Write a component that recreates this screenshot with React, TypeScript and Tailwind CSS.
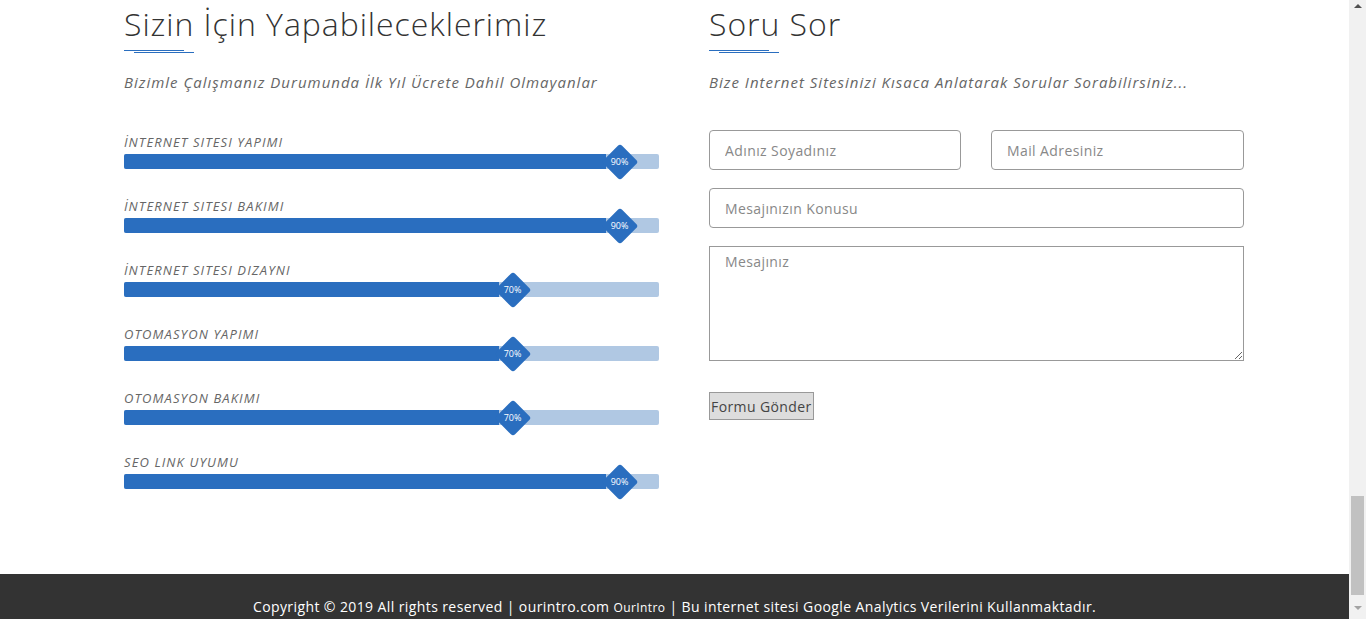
import React from 'react';

const skills = [
  { label: 'İNTERNET SITESI YAPIMI', value: 90 },
  { label: 'İNTERNET SITESI BAKIMI', value: 90 },
  { label: 'İNTERNET SITESI DIZAYNI', value: 70 },
  { label: 'OTOMASYON YAPIMI', value: 70 },
  { label: 'OTOMASYON BAKIMI', value: 70 },
  { label: 'SEO LINK UYUMU', value: 90 },
];

function SectionTitle({ title, subtitle }: { title: string; subtitle: string }) {
  return (
    <div>
      <h2 className="pt-[4px] text-[32px] leading-[40px] font-light tracking-[0.95px] text-[#333]">{title}</h2>
      <div className="mt-[6px] h-[1px] w-[60px] bg-[#2a6ebf]" />
      <div className="mt-[1px] ml-[10px] h-[1px] w-[60px] bg-[#2a6ebf]" />
      <p className="mt-[19px] text-[15px] leading-[20px] italic tracking-[1px] text-[#666]">{subtitle}</p>
    </div>
  );
}

function SkillBar({ label, value }: { label: string; value: number }) {
  return (
    <div className="h-[64px]">
      <div className="text-[13px] leading-[16px] italic tracking-[1.1px] text-[#666]">{label}</div>
      <div className="relative mt-[4px] h-[15px] rounded-[2px] bg-[#b0c8e3]">
        <div className="h-full rounded-l-[2px] bg-[#2a6ebf]" style={{ width: `${value}%` }} />
        <div
          className="absolute top-[-13px] flex h-[41px] w-[36px] items-center justify-center"
          style={{ left: `calc(${value}% - 4px)` }}
        >
          <div className="absolute h-[26px] w-[26px] rotate-45 rounded-[3px] bg-[#2a6ebf]" />
          <span className="relative text-[9px] text-white">{value}%</span>
        </div>
      </div>
    </div>
  );
}

const field =
  'h-[40px] rounded-[4px] border border-[#999] px-[15px] text-[14px] tracking-[0.4px] text-[#555] placeholder:text-[#888] outline-none';

export default function App() {
  return (
    <div className="flex h-[619px] overflow-hidden bg-white" style={{ fontFamily: '"Open Sans", "DejaVu Sans", sans-serif' }}>
      <div className="flex flex-1 flex-col">
        <main className="flex flex-1 gap-[50px] pl-[124px]">
          <section className="w-[535px]">
            <SectionTitle
              title="Sizin İçin Yapabileceklerimiz"
              subtitle="Bizimle Çalışmanız Durumunda İlk Yıl Ücrete Dahil Olmayanlar"
            />
            <div className="mt-[42px]">
              {skills.map((s) => (
                <SkillBar key={s.label} label={s.label} value={s.value} />
              ))}
            </div>
          </section>

          <section className="w-[535px]">
            <SectionTitle
              title="Soru Sor"
              subtitle="Bize Internet Sitesinizi Kısaca Anlatarak Sorular Sorabilirsiniz..."
            />
            <div className="mt-[38px] flex flex-col">
              <div className="flex gap-[30px]">
                <input className={`${field} w-[252px]`} placeholder="Adınız Soyadınız" />
                <input className={`${field} w-[253px]`} placeholder="Mail Adresiniz" />
              </div>
              <input className={`${field} mt-[18px] w-[535px]`} placeholder="Mesajınızın Konusu" />
              <textarea
                className="mt-[18px] h-[115px] w-[535px] border border-[#999] px-[15px] pt-[4px] text-[14px] tracking-[0.4px] text-[#555] placeholder:text-[#888] outline-none"
                placeholder="Mesajınız"
              />
              <div className="mt-[31px]">
                <button className="h-[28px] border border-[#999] bg-[#ddd] px-[1px] text-[14px] tracking-[0.4px] text-[#444]">
                  Formu Gönder
                </button>
              </div>
            </div>
          </section>
        </main>

        <footer className="h-[45px] bg-[#333] pt-[21px] text-center text-[14px] leading-[24px] tracking-[0.4px] text-white">
          Copyright © 2019 All rights reserved | ourintro.com <span className="text-[12px]">OurIntro</span> | Bu internet
          sitesi Google Analytics Verilerini Kullanmaktadır.
        </footer>
      </div>

      <div className="flex w-[17px] flex-col items-center bg-[#f1f1f1]">
        <div className="mt-[4px] h-0 w-0 border-x-[4px] border-b-[4px] border-x-transparent border-b-[#505050]" />
        <div className="mt-[488px] h-[99px] w-[13px] bg-[#c1c1c1]" />
        <div className="mt-[11px] h-0 w-0 border-x-[4px] border-t-[4px] border-x-transparent border-t-[#a3a3a3]" />
      </div>
    </div>
  );
}
